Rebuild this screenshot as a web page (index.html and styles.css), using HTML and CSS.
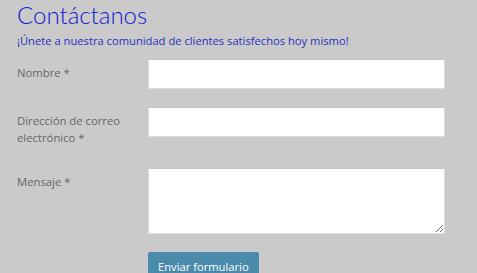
FILE: index.html
```html
<!DOCTYPE html>
<html lang="es">
<head>
<meta charset="utf-8">
<link rel="stylesheet" href="styles.css">
</head>
<body>
<main class="page">
  <h1 class="title">Contáctanos</h1>
  <p class="subtitle">¡Únete a nuestra comunidad de clientes satisfechos hoy mismo!</p>
  <form class="form">
    <div class="row">
      <label class="label" for="n">Nombre *</label>
      <input class="field" id="n" type="text">
    </div>
    <div class="row">
      <label class="label" for="e">Dirección de correo electrónico *</label>
      <input class="field" id="e" type="email">
    </div>
    <div class="row">
      <label class="label" for="m">Mensaje *</label>
      <textarea class="field area" id="m"></textarea>
    </div>
    <div class="row">
      <span class="label"></span>
      <button class="submit" type="button">Enviar formulario</button>
    </div>
  </form>
</main>
</body>
</html>
```
FILE: styles.css
```css
html, body {
  margin: 0;
  padding: 0;
  background: #cacaca;
}
.page {
  padding: 0 17px;
  font-family: "Open Sans", "Liberation Sans", sans-serif;
}
.title {
  margin: 0;
  padding-top: 1px;
  font-family: "Lato", "Noto Sans", sans-serif;
  font-weight: 300;
  font-size: 24px;
  line-height: 28px;
  color: #1020d4;
}
.subtitle {
  margin: 3px 0 0;
  font-size: 11.2px;
  line-height: 18px;
  color: #2830c0;
}
.form {
  display: flex;
  flex-direction: column;
  gap: 18px;
  margin-top: 9px;
}
.row {
  display: grid;
  grid-template-columns: 131px 297px;
  align-items: start;
}
.label {
  padding: 5px 0 4px;
  font-size: 11.3px;
  line-height: 17px;
  color: #666;
}
.field {
  box-sizing: border-box;
  width: 297px;
  height: 30px;
  margin: 0;
  border: 1px solid #dcdcdc;
  border-top-color: #c4c4c4;
  background: #fff;
  font: inherit;
}
.area {
  height: 66px;
  resize: vertical;
  display: block;
}
.submit {
  justify-self: start;
  height: 28px;
  margin: 0;
  padding: 0 10px;
  border: 0;
  border-radius: 2px;
  background: #4a8aab;
  color: #fff;
  white-space: nowrap;
  font-family: "Open Sans", "Liberation Sans", sans-serif;
  font-size: 11.2px;
}
```
